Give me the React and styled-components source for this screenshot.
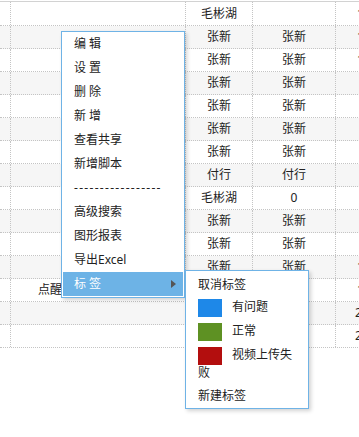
import styled, { createGlobalStyle } from "styled-components"

const GlobalStyle = createGlobalStyle`
    html, body {
        margin: 0;
        padding: 0;
        background: #fff;
        overflow: hidden;
    }
    body {
        font-family: "Noto Sans", "Noto Sans CJK SC", sans-serif;
        font-size: 12px;
        color: #222;
    }
`

const rows = [
    ["", "毛彬湖", "", "1"],
    ["", "张新", "张新", "1"],
    ["", "张新", "张新", "1"],
    ["", "张新", "张新", ""],
    ["", "张新", "张新", ""],
    ["", "张新", "张新", ""],
    ["", "张新", "张新", ""],
    ["", "付行", "付行", ""],
    ["", "毛彬湖", "0", ""],
    ["", "张新", "张新", ""],
    ["", "张新", "张新", ""],
    ["", "张新", "张新", "1"],
    ["点醒息流程测试项目名", "张新", "张新", "1"],
    ["", "", "", "2"],
    ["", "", "", "2"],
]

const menuItems = ["编 辑", "设 置", "删 除", "新 增", "查看共享", "新增脚本", "-----------------", "高级搜索", "图形报表", "导出Excel"]

const tags = [
    { name: "有问题", color: "#1e88e8" },
    { name: "正常", color: "#5e9123" },
    { name: "视频上传失败", color: "#b30e0e" },
]

function App() {
    return (
        <Page>
            <GlobalStyle />
            <Grid>
                {rows.map((row, i) => (
                    <Row key={i} $first={i === 0} $shaded={i % 2 === 1}>
                        <Cell />
                        <Cell>{row[0]}</Cell>
                        <Cell>{row[1]}</Cell>
                        <Cell>{row[2]}</Cell>
                        <LastCell $wide={row[3] === "2"}>{row[3]}</LastCell>
                    </Row>
                ))}
            </Grid>

            <Menu>
                {menuItems.map(item => (
                    <MenuItem key={item} $dash={item.startsWith("-")}>{item}</MenuItem>
                ))}
                <MenuItem $active>
                    标 签
                    <Arrow />
                    <SubMenu>
                        <SubItem>取消标签</SubItem>
                        {tags.map(tag => (
                            <TagItem key={tag.name}>
                                <Swatch $color={tag.color} />
                                {tag.name}
                            </TagItem>
                        ))}
                        <SubItem>新建标签</SubItem>
                    </SubMenu>
                </MenuItem>
            </Menu>
        </Page>
    )
}

const Page = styled.div`
    position: relative;
    width: 359px;
    height: 437px;
`

const Grid = styled.div`
    margin-top: 1px;
    border-top: 1px solid #d2d2d2;
    width: 420px;
`

const Row = styled.div`
    display: grid;
    grid-template-columns: 10px 175px 67px 83px 1fr;
    height: ${props => props.$first ? "23px" : "22px"};
    border-bottom: 1px dotted #c4c4c4;
    background: ${props => props.$shaded ? "#f6f6f6" : "#fff"};
`

const Cell = styled.div`
    display: flex;
    align-items: center;
    justify-content: center;
    white-space: nowrap;
    line-height: 16px;
    & + & {
        border-left: 1px dotted #c4c4c4;
    }
`

const LastCell = styled(Cell)`
    justify-content: flex-start;
    padding-left: ${props => props.$wide ? "19px" : "21px"};
`

const Menu = styled.div`
    position: absolute;
    left: 61px;
    top: 30px;
    width: 124px;
    box-sizing: border-box;
    padding: 0 1px 1px;
    background: #fff;
    border: 1px solid #6fb3e6;
    box-shadow: 2px 2px 4px rgba(0, 0, 0, 0.18);
`

const MenuItem = styled.div`
    position: relative;
    height: 24px;
    line-height: 24px;
    padding-left: 11px;
    white-space: pre;
    color: ${props => props.$active ? "#fff" : "#222"};
    background: ${props => props.$active ? "#6db3e6" : "transparent"};
    letter-spacing: ${props => props.$dash ? "1.3px" : "0"};
`

const Arrow = styled.span`
    position: absolute;
    right: 7px;
    top: 8px;
    width: 0;
    height: 0;
    border-left: 5px solid #555;
    border-top: 4.5px solid transparent;
    border-bottom: 4.5px solid transparent;
`

const SubMenu = styled.div`
    position: absolute;
    left: calc(100% + 2px);
    top: -2px;
    width: 124px;
    box-sizing: border-box;
    padding-top: 2px;
    background: #fff;
    border: 1px solid #6fb3e6;
    box-shadow: 2px 2px 4px rgba(0, 0, 0, 0.18);
    color: #222;
    white-space: normal;
    line-height: 16px;
`

const SubItem = styled.div`
    height: 23px;
    line-height: 23px;
    padding: 0 12px;
    &:last-child {
        height: 24px;
        line-height: 24px;
    }
`

const TagItem = styled.div`
    padding: 3px 12px 3px 12px;
    line-height: 16px;
`

const Swatch = styled.span`
    display: inline-block;
    width: 24px;
    height: 18px;
    margin-right: 10px;
    vertical-align: middle;
    background: ${props => props.$color};
`

export default App
